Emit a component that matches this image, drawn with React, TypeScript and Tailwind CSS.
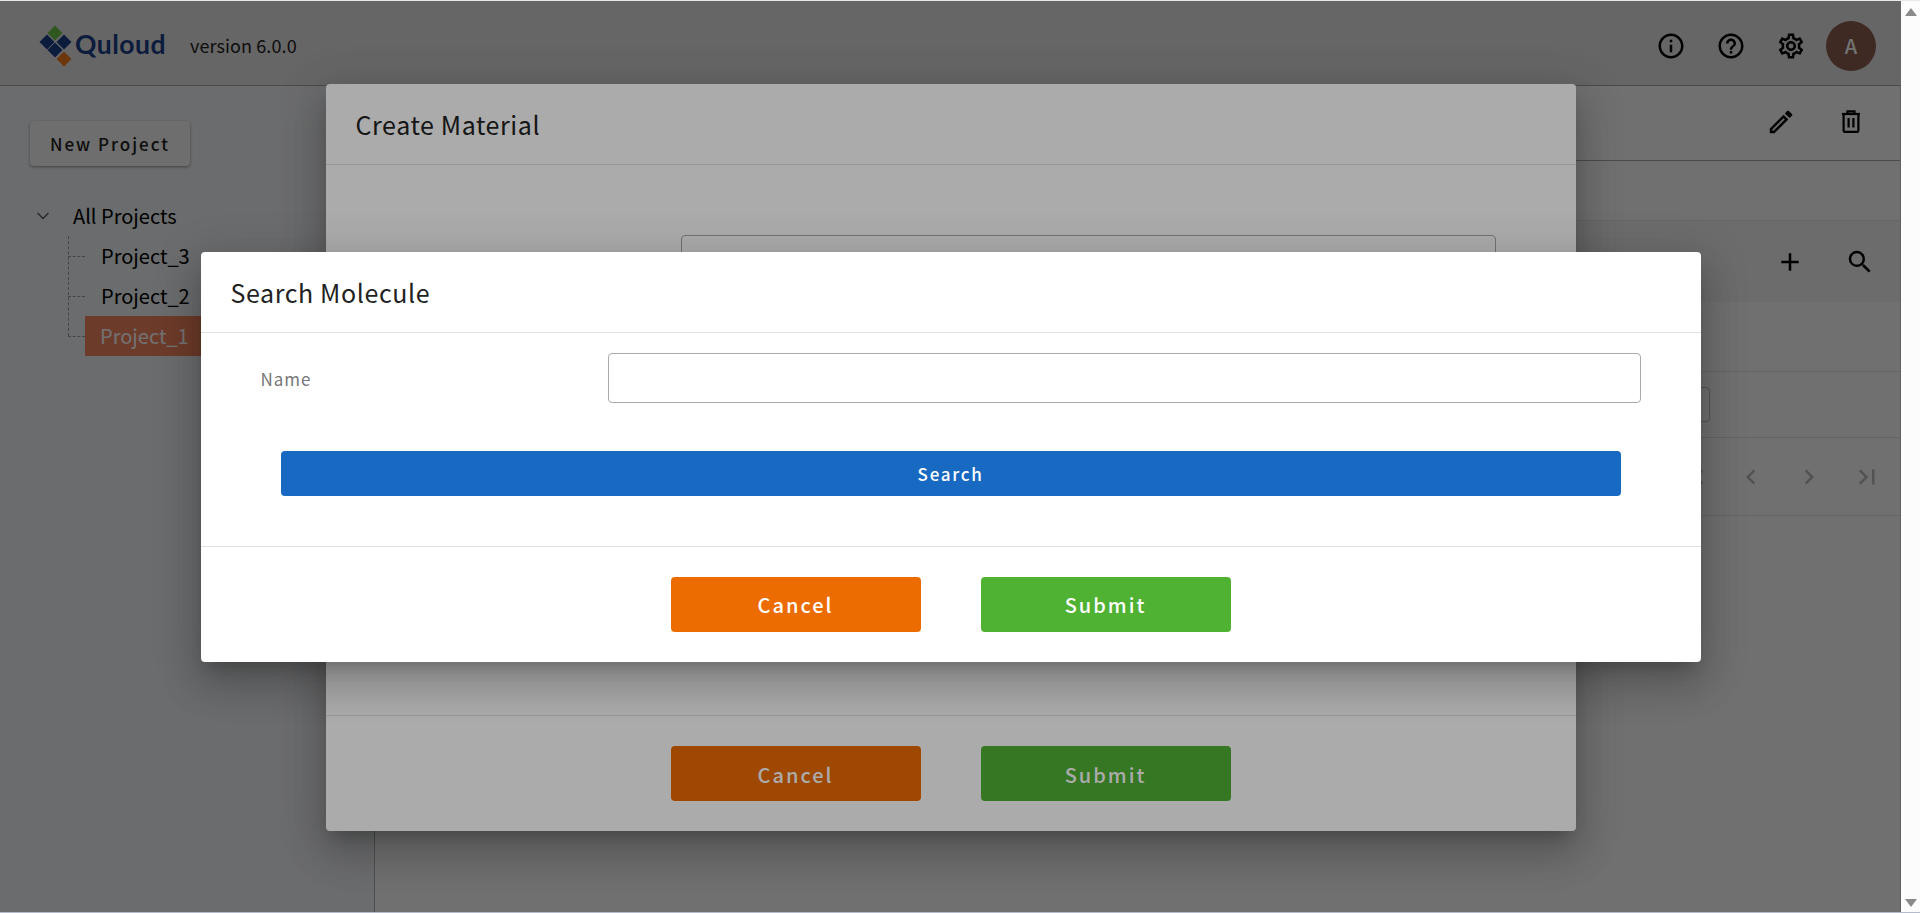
import React from "react";
import { ChevronDown } from "lucide-react";
import {
    MdInfoOutline,
    MdHelpOutline,
    MdOutlineSettings,
    MdOutlineEdit,
    MdAdd,
    MdSearch,
    MdFirstPage,
    MdChevronLeft,
    MdChevronRight,
    MdLastPage
} from "react-icons/md";

const font = "font-['Noto_Sans_CJK_KR','Noto_Sans',sans-serif]";
const MODAL_SHADOW = "shadow-[0_11px_15px_-7px_rgba(0,0,0,0.2),0_24px_38px_3px_rgba(0,0,0,0.14),0_9px_46px_8px_rgba(0,0,0,0.12)]";

function Logo() {
    return (
        <div className="flex items-center -mt-[2px]">
            <svg width="46" height="46" viewBox="0 0 46 46">
                <path d="M17 3.5 L24.5 11 L17 18.5 L9.5 11 Z" fill="#6cc24a" />
                <path d="M9 12.5 L16.5 20 L9 27.5 L1.5 20 Z" fill="#1d4089" />
                <path d="M26 12.5 L33.5 20 L26 27.5 L18.5 20 Z" fill="#1d4089" />
                <path d="M17 20.5 L24.5 28 L17 35.5 L9.5 28 Z" fill="#1d4089" />
                <path d="M26 29.5 L33.5 37 L26 44.5 L18.5 37 Z" fill="#f47a1f" />
            </svg>
            <span className="text-[#1d4089] font-['Lato',sans-serif] font-bold text-[26.5px] leading-none tracking-[0.5px] -ml-[9px]">Quloud</span>
        </div>
    );
}

function TrashIcon() {
    return (
        <svg width="30" height="30" viewBox="0 0.5 30 30" fill="none" stroke="currentColor" strokeWidth="2.2">
            <path d="M6 7.5h18" />
            <path d="M11.5 7V4.8h7V7" />
            <path d="M7.6 7.5v16.2c0 1 .7 1.7 1.7 1.7h11.4c1 0 1.7-.7 1.7-1.7V7.5" />
            <path d="M12.6 11.5v9.5M17.4 11.5v9.5" />
        </svg>
    );
}

function TreeItem({ label, active }: { label: string; active?: boolean }) {
    return (
        <div className="flex h-10 items-center">
            <div className="w-[17px] border-t border-dashed border-[#9a9a9a]" />
            <div className={active ? "h-10 flex items-center pl-[15px] pr-5 w-[130px] bg-[#f4845f] text-white" : "h-10 flex items-center pl-[16px] text-black"}>
                {label}
            </div>
        </div>
    );
}

function FooterButtons() {
    return (
        <div className="flex justify-center gap-[60px] border-t border-[#e0e0e0] py-[30px]">
            <button type="button" className="w-[250px] h-[55px] pt-[2px] rounded bg-[#ed6c02] text-white text-[20px] font-medium tracking-[2px]">Cancel</button>
            <button type="button" className="w-[250px] h-[55px] pt-[2px] rounded bg-[#4fb233] text-white text-[20px] font-medium tracking-[2px]">Submit</button>
        </div>
    );
}

export default function App() {
    return (
        <div className={`flex flex-col h-screen w-full overflow-hidden bg-[#b4bccb] ${font}`}>
            <div className="h-px bg-[#e8e8e8]" />
            <div className="flex flex-1 min-h-0">
                <div className="relative w-[1901px] h-full overflow-hidden bg-[#f9f9f9] flex flex-col">
                    {/* page behind the dialogs */}
                    <header className="flex items-center h-[85px] shrink-0 bg-[#e3e3e3] border-b border-[#a8a8a8] pt-[5px] pl-[38px] pr-[25px]">
                        <Logo />
                        <span className="ml-[24px] text-[18px] tracking-[0.1px] text-[#222]">version 6.0.0</span>
                        <div className="ml-auto flex items-center gap-[30px] text-black">
                            <MdInfoOutline size={30} />
                            <MdHelpOutline size={30} />
                            <MdOutlineSettings size={30} />
                            <div className="ml-[-10px] w-[50px] h-[50px] rounded-full bg-[#8c5d50] text-white font-medium text-[20px] flex items-center justify-center">A</div>
                        </div>
                    </header>
                    <div className="flex flex-1 min-h-0">
                        <aside className="w-[375px] shrink-0 bg-[#eff1f4] border-r border-[#b0b0b0] pt-[35px]">
                            <button type="button" className="ml-[30px] w-[160px] h-[45px] rounded bg-[#f6f6f6] shadow-[0_1px_3px_rgba(0,0,0,0.4)] text-[17px] tracking-[2px] font-medium text-[#222]">New Project</button>
                            <div className="mt-[30px] text-[20px] text-black">
                                <div className="flex h-10 items-center">
                                    <ChevronDown size={20} strokeWidth={2} className="ml-[33px] text-[#666]" />
                                    <span className="ml-[20px]">All Projects</span>
                                </div>
                                <div className="relative ml-[68px]">
                                    <div className="absolute left-0 top-0 h-[100px] border-l border-dashed border-[#9a9a9a]" />
                                    <TreeItem label="Project_3" />
                                    <TreeItem label="Project_2" />
                                    <TreeItem label="Project_1" active />
                                </div>
                            </div>
                        </aside>
                        <main className="flex-1 min-w-0 border-r border-[#d8d8d8]">
                            <div className="flex items-center justify-end h-[75px] border-b border-[#a8a8a8] pb-[2px] pr-[34px] gap-[40px] text-black">
                                <MdOutlineEdit size={30} />
                                <TrashIcon />
                            </div>
                            <div className="h-[60px] border-b border-[#e4e4e4]" />
                            <div className="flex items-center justify-end h-[81px] bg-[#f0f0f0] pr-[25px] gap-[40px] text-black">
                                <MdAdd size={30} />
                                <MdSearch size={30} />
                            </div>
                            <div className="h-[70px] border-b border-[#dedede]" />
                            <div className="flex items-center h-[66px] border-b border-[#dedede]">
                                <div className="ml-[1102px] w-[233px] h-[35px] rounded border border-[#c0c0c0]" />
                            </div>
                            <div className="flex items-center justify-end gap-[28px] h-[78px] border-b border-[#dedede] pr-[18px] text-[#b8b8b8]">
                                <MdFirstPage size={30} className="-mr-[2px]" />
                                <MdChevronLeft size={30} />
                                <MdChevronRight size={30} />
                                <MdLastPage size={30} />
                            </div>
                        </main>
                    </div>

                    {/* first dialog */}
                    <div className="absolute inset-0 bg-black/33 flex items-center justify-center pt-[2px]">
                        <div className={`w-[1250px] h-[747px] flex flex-col rounded bg-white ${MODAL_SHADOW}`}>
                            <div className="flex items-center h-[81px] shrink-0 border-b border-[#e0e0e0] pl-[30px] pt-[2px] text-[25px] tracking-[0.6px] text-[#222]">Create Material</div>
                            <div className="flex-1 pt-[70px] pl-[355px]">
                                <div className="w-[815px] h-[50px] rounded border border-[#aaaaaa]" />
                            </div>
                            <FooterButtons />
                        </div>
                    </div>

                    {/* second dialog */}
                    <div className="absolute inset-0 bg-black/33 flex items-center justify-center">
                        <div className={`w-[1500px] h-[410px] flex flex-col rounded bg-white ${MODAL_SHADOW}`}>
                            <div className="flex items-center h-[81px] shrink-0 border-b border-[#e0e0e0] pl-[30px] pt-[2px] text-[25px] tracking-[0.6px] text-[#222]">Search Molecule</div>
                            <div className="flex-1 pt-[20px]">
                                <div className="flex items-center pl-[60px] pr-[60px]">
                                    <label className="w-[347px] pt-[2px] text-[17px] tracking-[1px] text-[#777]">Name</label>
                                    <input type="text" className="flex-1 h-[50px] rounded border border-[#aaaaaa] outline-none" />
                                </div>
                                <button type="button" className="block mx-[80px] mt-[48px] w-[1340px] h-[45px] pt-[2px] rounded bg-[#1769c2] text-white text-[17px] font-medium tracking-[1.7px]">Search</button>
                            </div>
                            <FooterButtons />
                        </div>
                    </div>
                </div>

                {/* browser scrollbar */}
                <div className="w-[19px] flex flex-col items-center justify-between bg-[#fcfcfc] pt-[7px] pb-[5px]">
                    <div className="w-0 h-0 border-x-[6.5px] border-x-transparent border-b-[8px] border-b-[#8a8a8a]" />
                    <div className="w-0 h-0 border-x-[6.5px] border-x-transparent border-t-[8px] border-t-[#8a8a8a]" />
                </div>
            </div>
            <div className="h-px bg-[#b4bccb]" />
        </div>
    );
}
